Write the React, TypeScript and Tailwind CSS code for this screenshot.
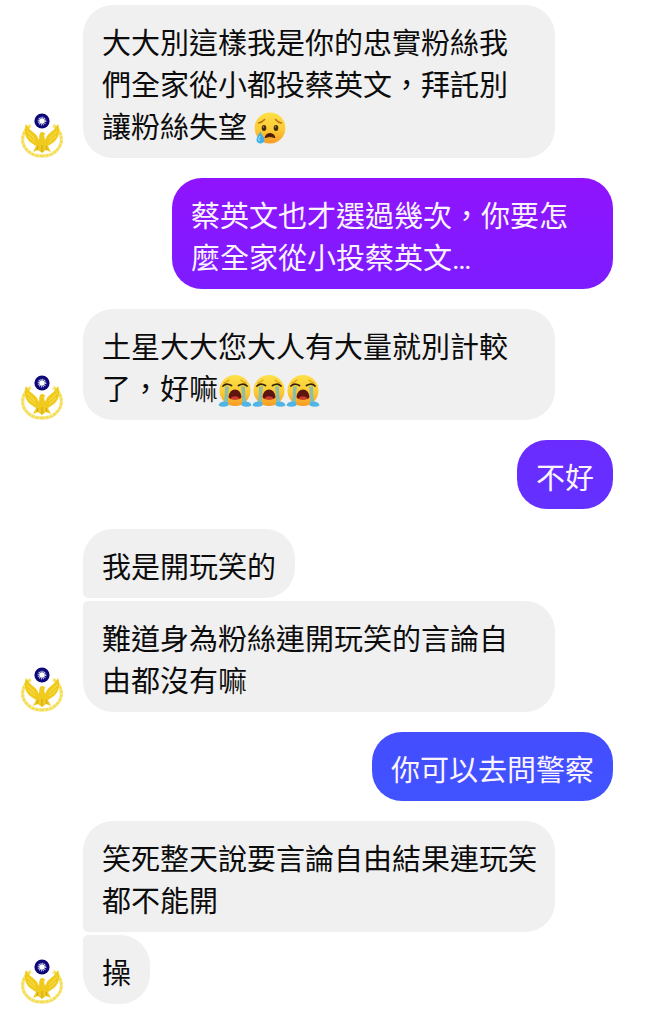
import type { ReactNode } from 'react';

function Avatar() {
  return (
    <svg viewBox="0 0 44 46" className="h-[46px] w-11 shrink-0" role="img" aria-label="avatar">
      <g fill="none" stroke="#f8eca0" strokeWidth="3.4">
        <path d="M11 13 C1 20 0 32 8 39 C12 43 17 44 22 44" />
        <path d="M33 13 C43 20 44 32 36 39 C32 43 27 44 22 44" />
      </g>
      <g fill="none" stroke="#f4dd50" strokeWidth="2.4" strokeDasharray="3.2 1">
        <path d="M10 14 C1 20 0 32 8 39 C12 43 17 44 22 44" />
        <path d="M34 14 C43 20 44 32 36 39 C32 43 27 44 22 44" />
      </g>
      <path
        d="M6 12 C9 18 14 20 17 24 L19 28 L19.4 23 C19.6 20.4 21 19.6 23 20 L25.6 22 L24 23 L25 28 L27 24 C30 20 35 18 38 12 C40 17 40 25 34 30 L28 34 L31 40 L26 38 L22 41 L18 38 L13 40 L16 34 L10 30 C4 25 4 17 6 12 Z"
        fill="#f0ca1c"
      />
      <path d="M7 19 L15 27 M8 24 L15 30 M37 19 L29 27 M36 24 L29 30" fill="none" stroke="#f9e567" strokeWidth="0.8" />
      <path d="M18 34 L17 38 M22 33 V40 M26 34 L27 38" stroke="#c29a28" strokeWidth="0.8" />
      <circle cx="22" cy="9" r="7.6" fill="#0c0877" />
      <circle cx="22" cy="9" r="3.6" fill="none" stroke="#c9d0f5" strokeWidth="1.6" strokeDasharray="1 .88" />
      <circle cx="22" cy="9" r="2.8" fill="#fff" />
    </svg>
  );
}

function FaceGradient({ id }: { id: string }) {
  return (
    <defs>
      <linearGradient id={id} x1="0" y1="0" x2="0" y2="1">
        <stop offset="0" stopColor="#fde046" />
        <stop offset="0.55" stopColor="#fccb35" />
        <stop offset="1" stopColor="#f79a24" />
      </linearGradient>
    </defs>
  );
}

function CryingFace() {
  return (
    <svg viewBox="0 0 32 32" className="inline-block size-8 align-[-6px]" role="img" aria-label="😢">
      <FaceGradient id="crying" />
      <circle cx="16" cy="16" r="15.4" fill="url(#crying)" />
      <path d="M4.5 11 Q8 10.5 10.5 7.5 M27.5 11 Q24 10.5 21.5 7.5" fill="none" stroke="#b8701c" strokeWidth="1.5" strokeLinecap="round" />
      <ellipse cx="10" cy="16" rx="2.3" ry="3" fill="#422b0d" />
      <ellipse cx="22" cy="16" rx="2.3" ry="3" fill="#422b0d" />
      <circle cx="9.5" cy="15" r=".8" fill="#b89065" />
      <circle cx="21.5" cy="15" r=".8" fill="#b89065" />
      <path d="M11 25.5 Q12 21.5 16 21.5 Q20 21.5 21 25.5 Q16 23.5 11 25.5 Z" fill="#4b1908" stroke="#4b1908" strokeLinejoin="round" />
      <path d="M6.5 19.5 C4.5 23 2.5 25 2.5 28 C2.5 30 4.5 31.5 6.5 31.5 C8.5 31.5 10.5 30 10.5 28 C10.5 25 7.5 23 6.5 19.5 Z" fill="#3fb0ea" />
      <path d="M6 24 C4.5 26 4.5 28 5.5 29" stroke="#b8e9ff" fill="none" />
    </svg>
  );
}

function SobbingFace() {
  return (
    <svg viewBox="0 0 34 34" className="inline-block size-[34px] align-[-8px]" role="img" aria-label="😭">
      <FaceGradient id="sobbing" />
      <circle cx="17" cy="16.5" r="15.5" fill="url(#sobbing)" />
      <path d="M6 9 Q9 8 11 6 M28 9 Q25 8 23 6" fill="none" stroke="#e0a020" strokeWidth="1.1" strokeLinecap="round" />
      <path d="M7 12.5 H11 Q9.5 21 10 30 L5 31 Q7.5 22 7 12.5 Z M27 12.5 H23 Q24.5 21 24 30 L29 31 Q26.5 22 27 12.5 Z" fill="#8dbfa8" />
      <path d="M6 27.5 Q1 28 .5 31.5 Q5 34 10.5 31.5 L10 28 Z M28 27.5 Q33 28 33.5 31.5 Q29 34 23.5 31.5 L24 28 Z" fill="#4fb4e6" />
      <path d="M5 12 Q8 8.5 13.5 11.5 M29 12 Q26 8.5 20.5 11.5" fill="none" stroke="#33240f" strokeWidth="1.8" strokeLinecap="round" />
      <path d="M10.5 23 Q11.5 15.5 17 15.5 Q22.5 15.5 23.5 23 Q23 25.5 17 25.5 Q11 25.5 10.5 23 Z" fill="#5e1710" />
      <path d="M12 24.5 Q17 20 22 24.5 Q17 26.5 12 24.5 Z" fill="#d2392f" />
    </svg>
  );
}

const base = 'px-[19px] pt-[18px] pb-[9px] whitespace-nowrap';

function Received({ shape, children }: { shape: string; children: ReactNode }) {
  return <p className={`${base} ${shape} bg-[#f0f0f0] text-[#0c0c0c]`}>{children}</p>;
}

function Incoming({ children }: { children: ReactNode }) {
  return (
    <article className="flex items-end gap-[19px]">
      <Avatar />
      <div className="flex flex-col items-start gap-[3px]">{children}</div>
    </article>
  );
}

function Outgoing({ tone, children }: { tone: string; children: ReactNode }) {
  return (
    <article className="flex justify-end pr-[18px]">
      <p className={`${base} ${tone} rounded-[30px] text-[#fbf4ff]`}>{children}</p>
    </article>
  );
}

export default function App() {
  return (
    <main
      lang="zh-Hant"
      className="flex min-h-screen flex-col gap-5 bg-white px-5 pt-[5px] pb-5 font-['Roboto','Noto_Sans_CJK_TC',sans-serif] text-[29px] leading-[42px]"
    >
      <Incoming>
        <Received shape="w-[472px] rounded-[30px]">
          大大別這樣我是你的忠實粉絲我<br />們全家從小都投蔡英文，拜託別<br />讓粉絲失望 <CryingFace />
        </Received>
      </Incoming>
      <Outgoing tone="w-[441px] bg-linear-to-b from-[#9013fe] to-[#7d1bff]">
        蔡英文也才選過幾次，你要怎<br />麼全家從小投蔡英文…
      </Outgoing>
      <Incoming>
        <Received shape="w-[472px] rounded-[30px]">
          土星大大您大人有大量就別計較<br />了，好嘛<SobbingFace /><SobbingFace /><SobbingFace />
        </Received>
      </Incoming>
      <Outgoing tone="bg-linear-to-b from-[#6b2bff] to-[#6331ff]">不好</Outgoing>
      <Incoming>
        <Received shape="rounded-[30px] rounded-bl-[5px]">我是開玩笑的</Received>
        <Received shape="w-[472px] rounded-[30px] rounded-tl-[5px]">
          難道身為粉絲連開玩笑的言論自<br />由都沒有嘛
        </Received>
      </Incoming>
      <Outgoing tone="bg-linear-to-b from-[#444dff] to-[#4053ff]">你可以去問警察</Outgoing>
      <Incoming>
        <Received shape="w-[472px] rounded-[30px] rounded-bl-[5px]">
          笑死整天說要言論自由結果連玩笑<br />都不能開
        </Received>
        <Received shape="rounded-[30px] rounded-tl-[5px]">操</Received>
      </Incoming>
    </main>
  );
}
